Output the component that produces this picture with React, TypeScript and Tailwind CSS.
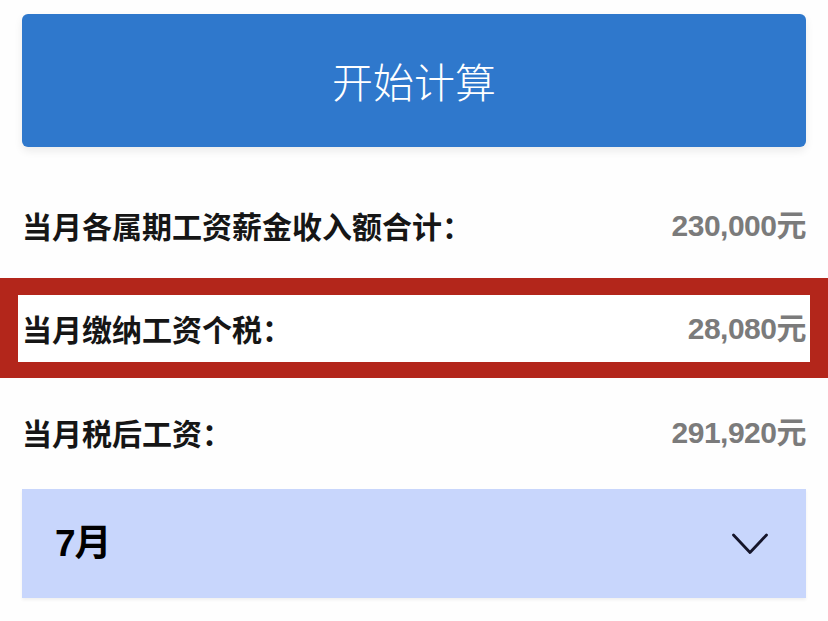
import React from "react";

const cjk = { fontFamily: '"Noto Sans CJK SC", "Noto Sans", sans-serif' };
const num = { fontFamily: '"Liberation Sans", "Noto Sans CJK SC", sans-serif' };

function Row({ label, value }: { label: string; value: string }) {
  return (
    <div className="flex h-[40px] items-center justify-between">
      <span className="text-[30px] font-bold text-[#161616]" style={cjk}>
        {label}
      </span>
      <span className="text-[30px] font-bold tracking-[-0.5px] text-[#7b7b7b]" style={num}>
        {value}
      </span>
    </div>
  );
}

export default function App() {
  return (
    <div className="h-[621px] w-[828px] overflow-hidden bg-[#fefefe]">
      <div className="px-[22px] pt-[14px]">
        <button
          type="button"
          className="flex h-[133px] w-full items-center justify-center rounded-[6px] bg-[#2f78cc] shadow-[0_4px_8px_rgba(0,0,0,0.08)]"
        >
          <span className="text-[41px] font-light text-white" style={cjk}>
            开始计算
          </span>
        </button>
      </div>

      <div className="mt-[58px] px-[22px]">
        <Row label="当月各属期工资薪金收入额合计：" value="230,000元" />
      </div>

      <div className="mt-[33px] border-x-[18px] border-t-[17px] border-b-[16px] border-[#b3261b] bg-white">
        <div className="flex h-[67px] items-center px-[4px]">
          <div className="w-full">
            <Row label="当月缴纳工资个税：" value="28,080元" />
          </div>
        </div>
      </div>

      <div className="mt-[34px] px-[22px]">
        <Row label="当月税后工资：" value="291,920元" />
      </div>

      <div className="mt-[37px] px-[22px]">
        <div className="flex h-[109px] items-center justify-between bg-[#c8d6fc] pl-[33px] pr-[38px] shadow-[0_2px_3px_rgba(0,0,0,0.06)]">
          <span className="text-[37px] font-bold tracking-[-1px] text-black" style={num}>
            7月
          </span>
          <svg width="36" height="22" viewBox="0 0 36 22" fill="none">
            <polyline
              points="1.5,2 18,19.5 34.5,2"
              stroke="#15152a"
              strokeWidth="2.8"
              strokeLinecap="round"
              strokeLinejoin="round"
            />
          </svg>
        </div>
      </div>
    </div>
  );
}
